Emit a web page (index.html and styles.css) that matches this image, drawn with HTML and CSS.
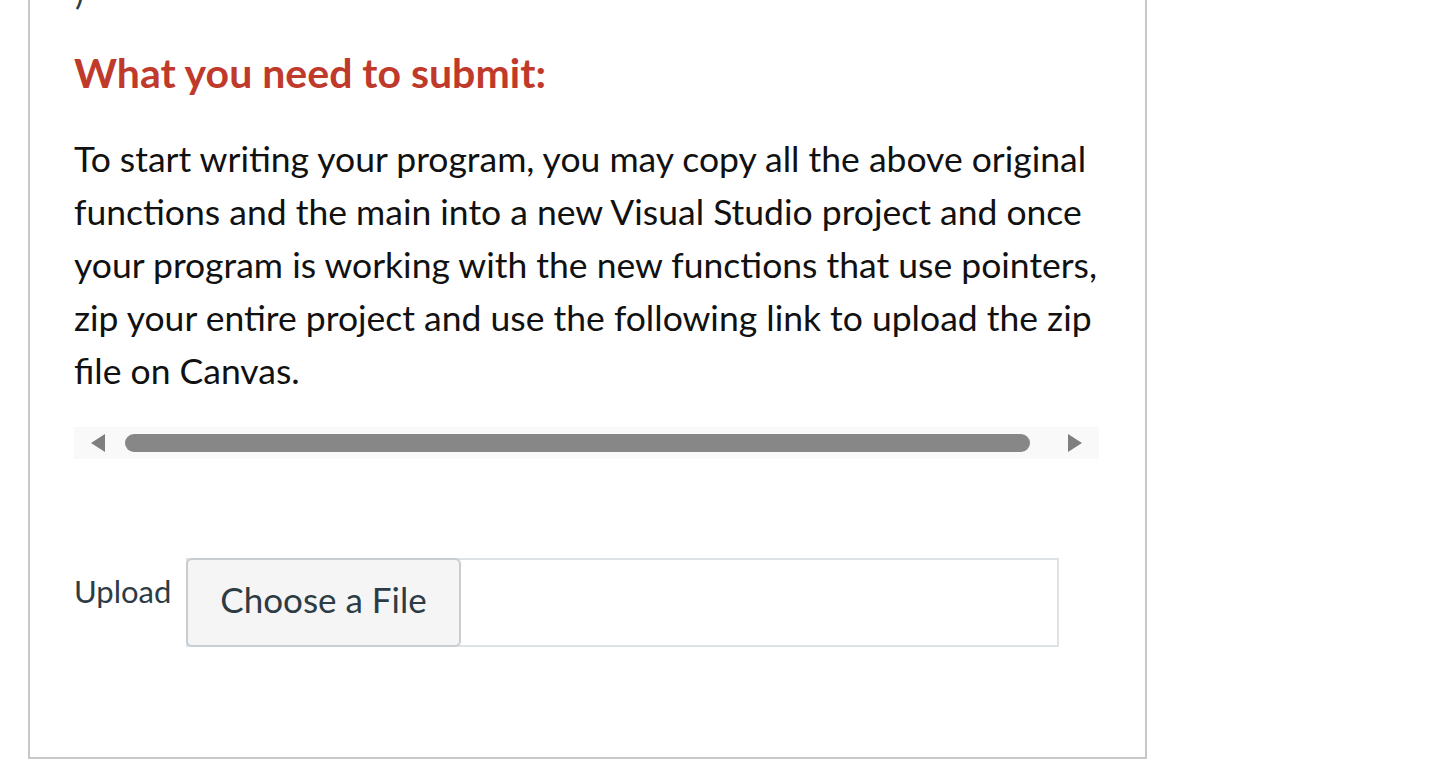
FILE: index.html
```html
<!DOCTYPE html>
<html>
<head>
<meta charset="utf-8">
<link rel="stylesheet" href="styles.css">
</head>
<body>
<div class="panel">
  <div class="prev">)</div>
  <h2 class="title">What you need to submit:</h2>
  <p class="body-text">To start writing your program, you may copy all the above original functions and the main into a new Visual Studio project and once your program is working with the new functions that use pointers, zip your entire project and use the following link to upload the zip file on Canvas.</p>
  <div class="scrollbar">
    <span class="arrow left"></span>
    <span class="thumb"></span>
    <span class="arrow right"></span>
  </div>
  <div class="upload-row">
    <span class="upload-label">Upload</span>
    <div class="file-input">
      <span class="file-btn">Choose a File</span>
      <span class="file-name"></span>
    </div>
  </div>
</div>
</body>
</html>
```
FILE: styles.css
```css
html, body {
  margin: 0;
  padding: 0;
  background: #ffffff;
  font-family: Lato, "Open Sans", sans-serif;
}
body {
  height: 763px;
  overflow: hidden;
  padding-top: 1px;
  box-sizing: border-box;
}
.panel {
  margin-left: 28px;
  margin-top: -1px;
  width: 1071px;
  height: 785px;
  border-left: 2px solid #c8c8c8;
  border-right: 2px solid #c8c8c8;
  border-bottom: 2px solid #c8c8c8;
  padding-left: 44px;
  box-sizing: content-box;
}
.prev {
  margin-top: -29px;
  height: 29px;
  font-size: 33px;
  line-height: 40px;
  color: #2d3b45;
  padding-left: 1px;
}
.title {
  margin: 47px 0 0 0;
  font-size: 41px;
  line-height: 50px;
  font-weight: 700;
  color: #bf3a2b;
}
.body-text {
  margin: 34px 0 0 0;
  width: 1030px;
  font-size: 35.5px;
  line-height: 53px;
  color: #111111;
}
.scrollbar {
  margin-top: 30px;
  width: 1025px;
  height: 32px;
  background: #f9f9f9;
  display: flex;
  align-items: center;
  padding: 0 17px;
  box-sizing: border-box;
}
.arrow {
  width: 0;
  height: 0;
  border-top: 9px solid transparent;
  border-bottom: 9px solid transparent;
}
.arrow.left {
  border-right: 14px solid #7f7f7f;
}
.arrow.right {
  border-left: 14px solid #7f7f7f;
}
.thumb {
  flex: 1;
  height: 18px;
  background: #878787;
  border-radius: 9px;
  margin: 0 38px 0 20px;
}
.upload-row {
  margin-top: 99px;
  display: flex;
  align-items: flex-start;
}
.upload-label {
  font-size: 31px;
  line-height: 38px;
  color: #2d3b45;
  margin-top: 14px;
  width: 112px;
}
.file-input {
  width: 873px;
  height: 89px;
  border: 2px solid #dde2e5;
  box-sizing: border-box;
  display: flex;
}
.file-btn {
  width: 275px;
  height: 89px;
  margin: -2px 0 0 -2px;
  padding-bottom: 8px;
  box-sizing: border-box;
  border: 2px solid #c7cdd1;
  border-radius: 6px;
  background: #f5f5f5;
  font-size: 35px;
  color: #2d3b45;
  display: flex;
  align-items: center;
  justify-content: center;
}
```
